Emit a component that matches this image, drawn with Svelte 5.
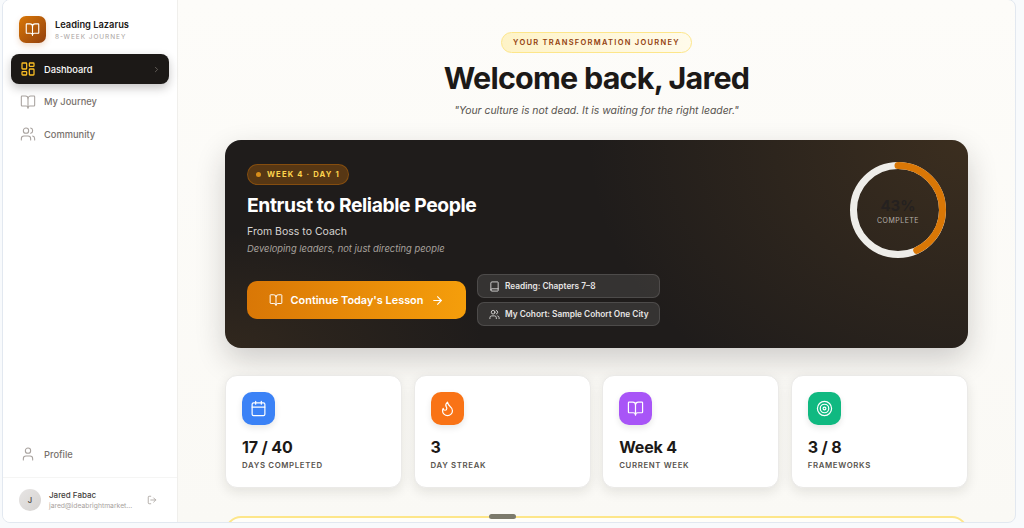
<script>
  const icons = {
    book: '<path d="M12 7v14"/><path d="M3 18a1 1 0 0 1-1-1V4a1 1 0 0 1 1-1h5a4 4 0 0 1 4 4 4 4 0 0 1 4-4h5a1 1 0 0 1 1 1v13a1 1 0 0 1-1 1h-6a3 3 0 0 0-3 3 3 3 0 0 0-3-3z"/>',
    dashboard: '<rect width="7" height="9" x="3" y="3" rx="1"/><rect width="7" height="5" x="14" y="3" rx="1"/><rect width="7" height="9" x="14" y="12" rx="1"/><rect width="7" height="5" x="3" y="16" rx="1"/>',
    chevron: '<path d="m9 18 6-6-6-6"/>',
    users: '<path d="M16 21v-2a4 4 0 0 0-4-4H6a4 4 0 0 0-4 4v2"/><circle cx="9" cy="7" r="4"/><path d="M22 21v-2a4 4 0 0 0-3-3.87"/><path d="M16 3.13a4 4 0 0 1 0 7.75"/>',
    user: '<path d="M19 21v-2a4 4 0 0 0-4-4H9a4 4 0 0 0-4 4v2"/><circle cx="12" cy="7" r="4"/>',
    logout: '<path d="M9 21H5a2 2 0 0 1-2-2V5a2 2 0 0 1 2-2h4"/><path d="m16 17 5-5-5-5"/><path d="M21 12H9"/>',
    calendar: '<path d="M8 2v4"/><path d="M16 2v4"/><rect width="18" height="18" x="3" y="4" rx="2"/><path d="M3 10h18"/>',
    flame: '<path d="M8.5 14.5A2.5 2.5 0 0 0 11 12c0-1.38-.5-2-1-3-1.072-2.143-.224-4.054 2-6 .5 2.5 2 4.9 4 6.5 2 1.6 3 3.5 3 5.5a7 7 0 1 1-14 0c0-1.153.433-2.294 1-3a2.5 2.5 0 0 0 2.5 2.5z"/>',
    target: '<circle cx="12" cy="12" r="10"/><circle cx="12" cy="12" r="6"/><circle cx="12" cy="12" r="2"/>',
    bookClosed: '<path d="M4 19.5v-15A2.5 2.5 0 0 1 6.5 2H19a1 1 0 0 1 1 1v18a1 1 0 0 1-1 1H6.5a1 1 0 0 1 0-5H20"/>',
    arrow: '<path d="M5 12h14"/><path d="m12 5 7 7-7 7"/>'
  }

  const nav = [
    { label: 'Dashboard', icon: 'dashboard', active: true },
    { label: 'My Journey', icon: 'book' },
    { label: 'Community', icon: 'users' }
  ]

  const stats = [
    { value: '17 / 40', label: 'Days Completed', icon: 'calendar', color: '#3b82f6' },
    { value: '3', label: 'Day Streak', icon: 'flame', color: '#f97316' },
    { value: 'Week 4', label: 'Current Week', icon: 'book', color: '#a855f7' },
    { value: '3 / 8', label: 'Frameworks', icon: 'target', color: '#10b981' }
  ]

  const percent = 43
  const radius = 44.5
  const circumference = 2 * Math.PI * radius
</script>

{#snippet icon(name, size, width = 2)}
  <svg class="icon" viewBox="0 0 24 24" width={size} height={size} fill="none" stroke="currentColor" stroke-width={width} stroke-linecap="round" stroke-linejoin="round">
    {@html icons[name]}
  </svg>
{/snippet}

<div class="frame">
  <aside class="sidebar">
    <div class="brand">
      <div class="logo">{@render icon('book', 15, 1.8)}</div>
      <div>
        <div class="brand-name">Leading Lazarus</div>
        <div class="brand-sub">8-WEEK JOURNEY</div>
      </div>
    </div>

    <nav class="nav">
      {#each nav as item}
        <div class="nav-item" class:active={item.active}>
          {@render icon(item.icon, 16, 1.6)}
          <span>{item.label}</span>
          {#if item.active}
            <span class="nav-chevron">{@render icon('chevron', 9, 2)}</span>
          {/if}
        </div>
      {/each}
    </nav>

    <div class="profile-wrap">
      <div class="nav-item">
        {@render icon('user', 16, 1.6)}
        <span>Profile</span>
      </div>
    </div>

    <div class="account">
      <div class="avatar">J</div>
      <div class="account-text">
        <div class="account-name">Jared Fabac</div>
        <div class="account-mail">jared@ideabrightmarket...</div>
      </div>
      <span class="logout">{@render icon('logout', 10, 2)}</span>
    </div>
  </aside>

  <main class="main">
    <header class="welcome">
      <div class="eyebrow">YOUR TRANSFORMATION JOURNEY</div>
      <h1>Welcome back, Jared</h1>
      <p>"Your culture is not dead. It is waiting for the right leader."</p>
    </header>

    <section class="hero">
      <div class="hero-left">
        <div class="week-pill"><i></i>WEEK 4 · DAY 1</div>
        <h2>Entrust to Reliable People</h2>
        <div class="hero-sub">From Boss to Coach</div>
        <div class="hero-note">Developing leaders, not just directing people</div>
        <div class="actions">
          <button class="cta">
            {@render icon('book', 14, 1.7)}
            <span>Continue Today's Lesson</span>
            {@render icon('arrow', 13, 2)}
          </button>
          <div class="chips">
            <div class="chip">{@render icon('bookClosed', 11, 1.8)}<span>Reading: Chapters 7–8</span></div>
            <div class="chip">{@render icon('users', 11, 1.8)}<span>My Cohort: Sample Cohort One City</span></div>
          </div>
        </div>
      </div>

      <div class="ring">
        <svg viewBox="0 0 96 96" width="96" height="96">
          <circle cx="48" cy="48" r={radius} fill="none" stroke="#eeede9" stroke-width="7" />
          <circle cx="48" cy="48" r={radius} fill="none" stroke="#d97706" stroke-width="7" stroke-linecap="round"
            stroke-dasharray="{circumference * percent / 100} {circumference}" transform="rotate(-90 48 48)" />
        </svg>
        <div class="ring-text">
          <div class="ring-value">{percent}%</div>
          <div class="ring-label">COMPLETE</div>
        </div>
      </div>
    </section>

    <section class="stats">
      {#each stats as stat}
        <div class="stat">
          <div class="stat-icon" style="background: {stat.color}">{@render icon(stat.icon, 17, 1.7)}</div>
          <div class="stat-value">{stat.value}</div>
          <div class="stat-label">{stat.label}</div>
        </div>
      {/each}
    </section>

    <section class="next-card"></section>
  </main>

  <div class="handle"></div>
</div>

<style>
  :global(body) {
    background: #f8fafc;
    font-family: Inter, "Liberation Sans", sans-serif;
    overflow: hidden;
  }

  .frame {
    position: relative;
    display: flex;
    box-sizing: border-box;
    width: 1014px;
    height: 524px;
    margin: -1px 0 0 2px;
    border: 1px solid #e2e8f0;
    border-radius: 8px;
    overflow: hidden;
    background: linear-gradient(#fdfcf9, #faf9f5);
  }

  .icon {
    display: block;
    flex: none;
  }

  .sidebar {
    flex: none;
    display: flex;
    flex-direction: column;
    width: 174px;
    background: #fff;
    border-right: 1px solid #f0efec;
  }

  .brand {
    display: flex;
    align-items: center;
    gap: 9px;
    padding: 16px 0 11px 16px;
  }

  .logo {
    display: flex;
    align-items: center;
    justify-content: center;
    width: 27px;
    height: 27px;
    border-radius: 7px;
    color: #fff;
    background: linear-gradient(135deg, #d97706, #92400e);
    box-shadow: 0 3px 6px rgba(180, 83, 9, 0.2);
  }

  .brand-name {
    font-size: 9.3px;
    font-weight: 600;
    line-height: 13px;
    color: #1c1917;
  }

  .brand-sub {
    margin-top: 2px;
    font-size: 6.5px;
    line-height: 9px;
    letter-spacing: 0.95px;
    color: #a8a29e;
  }

  .nav {
    display: flex;
    flex-direction: column;
    gap: 2.7px;
    padding: 0 8px;
  }

  .nav-item {
    display: flex;
    align-items: center;
    gap: 8px;
    height: 30px;
    padding: 0 9px;
    border-radius: 8px;
    font-size: 9.3px;
    font-weight: 500;
    color: #78716c;
  }

  .nav-item :global(svg) {
    color: #a8a29e;
  }

  .nav-item.active {
    color: #fafaf9;
    background: #1c1917;
    box-shadow: 0 4px 10px rgba(28, 25, 23, 0.25);
  }

  .nav-item.active > :global(svg) {
    color: #fbbf24;
    stroke-width: 1.9;
  }

  .nav-chevron {
    margin-left: auto;
    margin-right: -1px;
  }

  .nav-chevron :global(svg) {
    color: #78716c;
  }

  .profile-wrap {
    margin-top: auto;
    padding: 0 8px 8px;
  }

  .account {
    display: flex;
    align-items: center;
    gap: 8px;
    height: 44px;
    padding: 0 16px;
    border-top: 1px solid #f5f5f4;
  }

  .avatar {
    flex: none;
    display: flex;
    align-items: center;
    justify-content: center;
    width: 22px;
    height: 22px;
    border-radius: 50%;
    font-size: 7.5px;
    font-weight: 600;
    color: #57534e;
    background: linear-gradient(135deg, #e7e5e4, #d6d3d1);
  }

  .account-text {
    flex: 1;
    min-width: 0;
  }

  .account-name {
    font-size: 8px;
    font-weight: 500;
    line-height: 11px;
    color: #44403c;
  }

  .account-mail {
    font-size: 6.8px;
    line-height: 10px;
    white-space: nowrap;
    color: #a8a29e;
  }

  .logout {
    color: #a8a29e;
    margin-right: 4px;
  }

  .main {
    flex: 1;
    box-sizing: border-box;
    min-width: 0;
    padding: 0 47px;
  }

  .welcome {
    display: flex;
    flex-direction: column;
    align-items: center;
    padding-top: 32px;
  }

  .eyebrow {
    box-sizing: border-box;
    height: 21px;
    padding: 0 11px;
    border: 1px solid #fde68a;
    border-radius: 11px;
    font-size: 7.5px;
    font-weight: 600;
    line-height: 19px;
    letter-spacing: 1.28px;
    color: #92400e;
    background: linear-gradient(90deg, #fef3c7, #fffbeb);
  }

  h1 {
    margin: 7px 0 0;
    font-size: 30.5px;
    font-weight: 700;
    line-height: 36px;
    letter-spacing: -0.78px;
    color: #1c1917;
  }

  .welcome p {
    margin: 7px 0 0;
    font-size: 10.4px;
    font-style: italic;
    line-height: 16px;
    color: #57534e;
  }

  .hero {
    display: flex;
    justify-content: space-between;
    box-sizing: border-box;
    height: 208px;
    margin-top: 21px;
    padding: 24px 22px 0;
    border-radius: 16px;
    background:
      radial-gradient(380px 300px at 100% 0%, rgba(120, 85, 40, 0.32), transparent),
      radial-gradient(260px 120px at 0% 100%, rgba(120, 85, 40, 0.2), transparent),
      #1f1c1b;
    box-shadow: 0 12px 30px rgba(28, 25, 23, 0.2);
  }

  .week-pill {
    display: flex;
    align-items: center;
    gap: 6px;
    box-sizing: border-box;
    width: fit-content;
    height: 21px;
    padding: 0 8px;
    border: 1px solid rgba(217, 119, 6, 0.35);
    border-radius: 11px;
    font-size: 7.7px;
    font-weight: 700;
    letter-spacing: 1.12px;
    color: #fcd34d;
    background: rgba(217, 119, 6, 0.3);
  }

  .week-pill i {
    width: 5px;
    height: 5px;
    border-radius: 50%;
    background: #d98e1a;
  }

  h2 {
    margin: 8px 0 0;
    font-size: 19.3px;
    font-weight: 700;
    line-height: 24px;
    letter-spacing: -0.4px;
    color: #fff;
  }

  .hero-sub {
    margin-top: 7px;
    font-size: 10.5px;
    line-height: 16px;
    color: #d6d3d1;
  }

  .hero-note {
    margin-top: 2px;
    font-size: 9.4px;
    font-style: italic;
    line-height: 14px;
    color: #a8a29e;
  }

  .actions {
    display: flex;
    align-items: center;
    gap: 11px;
    margin-top: 18px;
  }

  .cta {
    display: flex;
    align-items: center;
    justify-content: center;
    gap: 8px;
    width: 219px;
    height: 38px;
    border: 0;
    border-radius: 10px;
    font-family: inherit;
    font-size: 10.9px;
    font-weight: 600;
    color: #fff;
    background: linear-gradient(90deg, #d97706, #f59e0b);
  }

  .chips {
    display: flex;
    flex-direction: column;
    gap: 4px;
  }

  .chip {
    display: flex;
    align-items: center;
    gap: 5px;
    box-sizing: border-box;
    width: 183px;
    height: 24px;
    padding: 0 0 0 11px;
    border: 1px solid rgba(255, 255, 255, 0.12);
    border-radius: 7px;
    font-size: 8.3px;
    font-weight: 600;
    white-space: nowrap;
    color: #e7e5e4;
    background: rgba(255, 255, 255, 0.1);
  }

  .ring {
    position: relative;
    width: 96px;
    height: 96px;
    margin-top: -2px;
  }

  .ring svg {
    display: block;
  }

  .ring-text {
    position: absolute;
    inset: 0;
    display: flex;
    flex-direction: column;
    align-items: center;
    justify-content: center;
  }

  .ring-value {
    font-size: 15px;
    font-weight: 700;
    line-height: 20px;
    color: #252120;
  }

  .ring-label {
    font-size: 7px;
    letter-spacing: 0.5px;
    line-height: 9px;
    color: #b5b0aa;
  }

  .stats {
    display: grid;
    grid-template-columns: repeat(4, 1fr);
    gap: 11.3px;
    margin-top: 27px;
  }

  .stat {
    box-sizing: border-box;
    height: 113px;
    padding: 16px 16px 0;
    border: 1px solid #ebeae8;
    border-radius: 12px;
    background: #fff;
    box-shadow: 0 4px 12px rgba(28, 25, 23, 0.1);
  }

  .stat-icon {
    display: flex;
    align-items: center;
    justify-content: center;
    width: 33px;
    height: 33px;
    border-radius: 10px;
    color: #fff;
    box-shadow: 0 3px 6px rgba(28, 25, 23, 0.1);
  }

  .stat-value {
    margin-top: 11px;
    font-size: 16px;
    font-weight: 700;
    line-height: 22px;
    letter-spacing: -0.15px;
    color: #1c1917;
  }

  .stat-label {
    margin-top: 2px;
    font-size: 7.8px;
    font-weight: 600;
    line-height: 11px;
    letter-spacing: 0.65px;
    text-transform: uppercase;
    color: #57534e;
  }

  .next-card {
    height: 60px;
    margin-top: 28px;
    border: 2px solid #fde68a;
    border-radius: 16px;
    background: #fffef9;
  }

  .handle {
    position: absolute;
    left: 486px;
    top: 514px;
    width: 27px;
    height: 5px;
    border-radius: 3px;
    background: #7c7a6c;
  }
</style>
